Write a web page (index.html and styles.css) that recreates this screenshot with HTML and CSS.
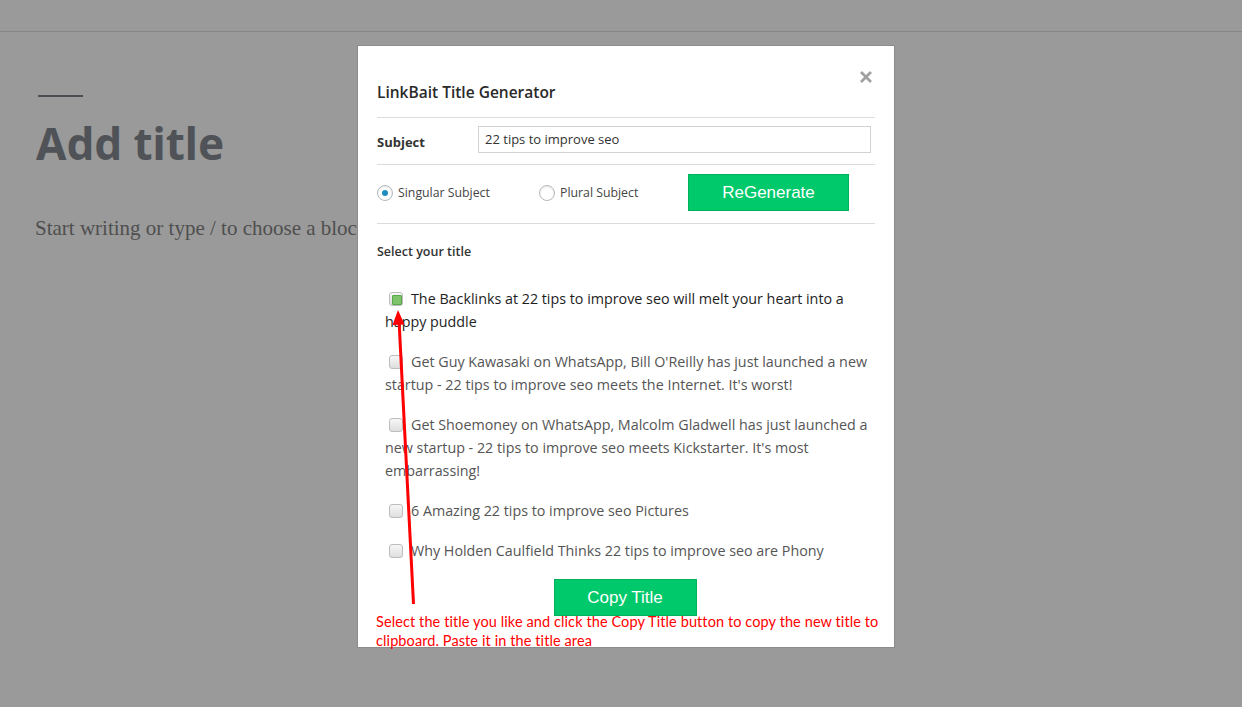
FILE: index.html
```html
<!DOCTYPE html>
<html>
<head>
<meta charset="utf-8">
<title>LinkBait Title Generator</title>
<link rel="stylesheet" href="styles.css">
</head>
<body>
  <div class="topbar"></div>
  <main class="editor">
    <div class="rule"></div>
    <h1 class="post-title">Add title</h1>
    <p class="placeholder">Start writing or type / to choose a block</p>
  </main>

  <div class="modal">
    <div class="modal-head">
      <h2 class="modal-title">LinkBait Title Generator</h2>
      <svg class="close" viewBox="0 0 14 14" width="14" height="14"><path d="M2 2 L12 12 M12 2 L2 12" stroke="#a0a0a0" stroke-width="2.8" stroke-linecap="butt"/></svg>
    </div>
    <hr class="sep">
    <div class="subject-row">
      <label class="subject-label">Subject</label>
      <div class="subject-input">22 tips to improve seo</div>
    </div>
    <hr class="sep">
    <div class="mode-row">
      <div class="radio-opt"><span class="radio checked"></span>Singular Subject</div>
      <div class="radio-opt"><span class="radio"></span>Plural Subject</div>
      <button class="btn regen">ReGenerate</button>
    </div>
    <hr class="sep">
    <div class="select-label">Select your title</div>
    <div class="titles">
      <p class="item active"><span class="cb checked"></span>The Backlinks at 22 tips to improve seo will melt your heart into a happy puddle</p>
      <p class="item"><span class="cb"></span>Get Guy Kawasaki on WhatsApp, Bill O'Reilly has just launched a new startup - 22 tips to improve seo meets the Internet. It's worst!</p>
      <p class="item"><span class="cb"></span>Get Shoemoney on WhatsApp, Malcolm Gladwell has just launched a new startup - 22 tips to improve seo meets Kickstarter. It's most embarrassing!</p>
      <p class="item"><span class="cb"></span>6 Amazing 22 tips to improve seo Pictures</p>
      <p class="item"><span class="cb"></span>Why Holden Caulfield Thinks 22 tips to improve seo are Phony</p>
    </div>
    <div class="copy-wrap"><button class="btn copy">Copy Title</button></div>
    <p class="note">Select the title you like and click the Copy Title button to copy the new title to clipboard. Paste it in the title area</p>
  </div>

  <svg class="arrow" width="1242" height="707" viewBox="0 0 1242 707">
    <line x1="413.5" y1="604" x2="399" y2="320" stroke="#ff0000" stroke-width="3"/>
    <polygon points="398,310 392.5,325 404.5,324.5" fill="#ff0000"/>
  </svg>
</body>
</html>
```
FILE: styles.css
```css
* { box-sizing: border-box; }

html, body {
  margin: 0;
  padding: 0;
}

body {
  width: 1242px;
  height: 707px;
  overflow: hidden;
  background: #9a9a9a;
  font-family: "Open Sans", "Noto Sans", sans-serif;
  position: relative;
}

.topbar {
  height: 32px;
  border-bottom: 1px solid #868686;
}

.editor {
  padding-left: 36px;
}

.rule {
  margin: 63px 0 0 2px;
  width: 45px;
  height: 2px;
  background: #4a4d52;
}

.post-title {
  margin: 18px 0 0;
  font-family: "Noto Sans", sans-serif;
  font-weight: 700;
  font-size: 44px;
  line-height: 56px;
  color: #4f5257;
}

.placeholder {
  margin: 43px 0 0 -1px;
  font-family: "Liberation Serif", serif;
  font-size: 21px;
  line-height: 28px;
  color: #4f4f4f;
}

/* modal */
.modal {
  position: absolute;
  left: 357px;
  top: 45px;
  width: 538px;
  height: 603px;
  background: #fff;
  border: 1px solid #8c8c8c;
  padding: 0 19px;
}

.modal-head {
  padding-top: 35px;
  padding-bottom: 14px;
}

.modal-title {
  margin: 0;
  font-size: 15.5px;
  line-height: 22px;
  font-weight: 600;
  color: #2a2a2a;
}

.close {
  position: absolute;
  top: 24px;
  right: 21px;
}

.sep {
  margin: 0;
  border: 0;
  border-top: 1px solid #dcdcdc;
}

.subject-row {
  display: flex;
  align-items: center;
  padding: 8px 4px 11px 0;
}

.subject-label {
  width: 101px;
  font-size: 13px;
  font-weight: 700;
  color: #333;
  padding-top: 4px;
}

.subject-input {
  flex: 1;
  height: 27px;
  border: 1px solid #d2d2d2;
  padding: 0 6px;
  font-size: 13px;
  line-height: 25px;
  color: #333;
}

.mode-row {
  display: grid;
  grid-template-columns: 162px 149px 161px;
  align-items: center;
  padding: 9px 0 12px;
}

.radio-opt {
  display: flex;
  align-items: center;
  font-size: 12.3px;
  color: #444;
}

.radio {
  width: 16px;
  height: 16px;
  border-radius: 50%;
  border: 1px solid #b4b9be;
  background: #fff;
  box-shadow: inset 0 1px 2px rgba(0,0,0,.1);
  margin-right: 5px;
  position: relative;
  flex: none;
}

.radio.checked::after {
  content: "";
  position: absolute;
  left: 4px;
  top: 4px;
  width: 6px;
  height: 6px;
  border-radius: 50%;
  background: #1e8cbe;
}

.btn {
  background: #00c96b;
  border: 1px solid #00b15a;
  color: #fff;
  font-family: "Liberation Sans", Arial, sans-serif;
  font-size: 17px;
  height: 37px;
  padding: 0;
  cursor: pointer;
}

.regen {
  width: 161px;
}

.select-label {
  margin-top: 19px;
  font-size: 12.5px;
  line-height: 18px;
  font-weight: 600;
  color: #333;
}

.titles {
  padding: 26px 0 0 8px;
}

.item {
  margin: 0 0 17px;
  font-size: 14.3px;
  line-height: 23px;
  color: #555;
}

.item.active {
  color: #1e1e1e;
}

.cb {
  display: inline-block;
  width: 14px;
  height: 14px;
  margin: 0 8px 0 4px;
  vertical-align: -2px;
  border: 1px solid #bdbdbd;
  border-radius: 3px;
  background: linear-gradient(#f7f7f7, #dedede);
  position: relative;
}

.cb.checked::after {
  content: "";
  position: absolute;
  left: 2px;
  top: 2px;
  width: 8px;
  height: 8px;
  border-radius: 1px;
  background: #7cc36a;
  border: 1px solid #5aa64a;
}

.copy-wrap {
  display: flex;
  justify-content: center;
}

.copy {
  width: 143px;
  margin-right: 2px;
}

.note {
  margin: -4px -8px 0 -1px;
  font-family: "Lato", "Open Sans", sans-serif;
  font-size: 14.5px;
  letter-spacing: 0.1px;
  line-height: 19px;
  color: #ff0000;
}

.arrow {
  position: absolute;
  left: 0;
  top: 0;
  pointer-events: none;
}
```
